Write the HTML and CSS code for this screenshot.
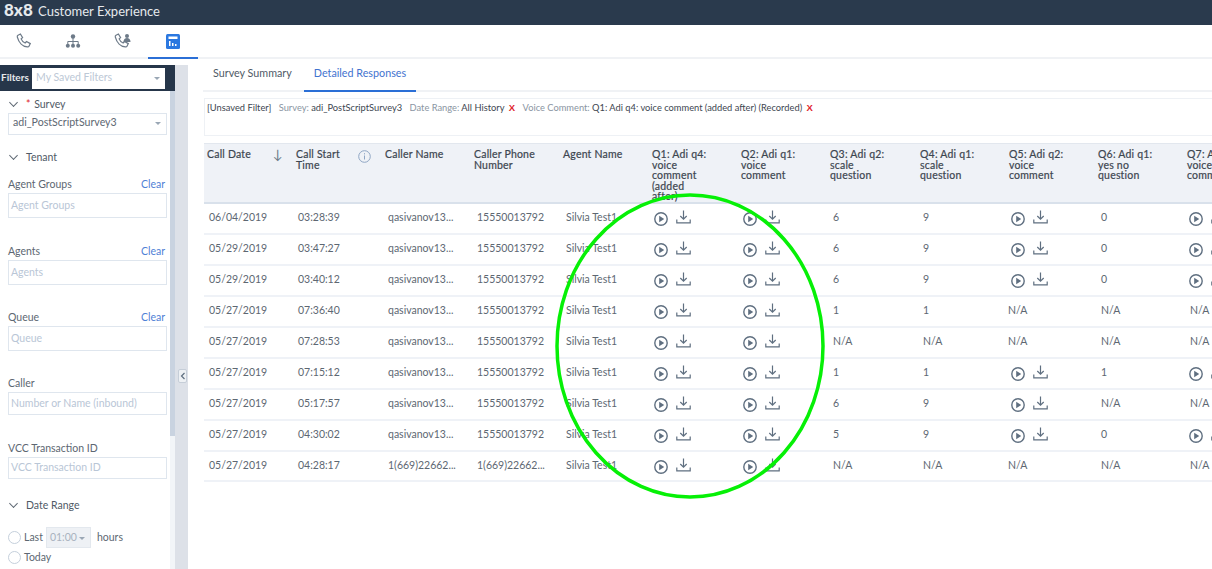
FILE: index.html
```html
<!DOCTYPE html>
<html>
<head>
    <meta charset="utf-8">
    <title>8x8 Customer Experience</title>
    <link rel="stylesheet" href="styles.css">
</head>
<body>
<svg class="defs" width="0" height="0">
    <symbol id="play" viewBox="0 0 14 14">
        <circle cx="7" cy="7" r="6.200" fill="none" stroke="#5f6f80" stroke-width="1.400"/>
        <path d="M5.200 3.800 10.200 7l-5 3.200z" fill="#5f6f80"/>
    </symbol>
    <symbol id="save" viewBox="0 0 15 14">
        <path d="M7.500 .5v8.500M4.300 6l3.200 3.200L10.700 6M.8 9.500v3.300h13.400V9.500" fill="none" stroke="#5f6f80" stroke-width="1.200"/>
    </symbol>
</svg>
<header class="topbar"><b class="logo">8x8</b> Customer Experience</header>
<nav class="nav">
    <a class="nav-item">
        <svg width="16" height="16" viewBox="0 0 16 16"><path d="M2 2.200 4.400 1l2.200 3.600-1.500 1.300c.7 1.800 2.200 3.300 4 4.100l1.400-1.500 3.800 2.100-1.300 2.600c-.3.600-1 .9-1.700.7C6.800 13.600 2.800 9.700 1.300 4c-.2-.7.100-1.400.7-1.800z" fill="none" stroke="#6d7a88" stroke-width="1.200"/></svg>
    </a>
    <a class="nav-item">
        <svg width="16" height="16" viewBox="0 0 16 16"><g fill="#6d7a88"><circle cx="8" cy="3.500" r="2.200"/><circle cx="2.800" cy="12.800" r="2"/><circle cx="8" cy="12.800" r="2"/><circle cx="13.200" cy="12.800" r="2"/></g><path d="M8 5v6M2.800 11V8.500h10.400V11" fill="none" stroke="#6d7a88"/></svg>
    </a>
    <a class="nav-item">
        <svg width="18" height="17" viewBox="0 0 18 17"><path d="M2 2.200 4.400 1l2.200 3.600-1.500 1.300c.7 1.800 2.200 3.300 4 4.100l1.400-1.500 3.800 2.100-1.300 2.600c-.3.600-1 .9-1.700.7C6.800 13.600 2.800 9.700 1.300 4c-.2-.7.100-1.400.7-1.800z" fill="none" stroke="#6d7a88" stroke-width="1.200"/><circle cx="13" cy="3" r="2" fill="#6d7a88"/><path d="M9.500 9c0-2.500 1.500-4 3.500-4s3.500 1.500 3.500 4z" fill="#6d7a88"/></svg>
    </a>
    <a class="nav-item active">
        <svg width="14" height="15" viewBox="0 0 14 15"><rect width="14" height="15" rx="1.500" fill="#2b78e0"/><rect x="2.500" y="2.500" width="9" height="2.500" fill="#fff"/><path d="M3 7h1.500v5H3zM6 9h1.500v3H6zM9 10h1.500v2H9z" fill="#fff"/></svg>
    </a>
</nav>
<div class="page">
    <aside class="sidebar">
        <div class="filters-head">
            <span class="filters-title">Filters</span>
            <div class="saved-filters">My Saved Filters<i class="caret"></i></div>
        </div>
        <div class="sidebar-body">
            <div class="filter-list">
                <div class="section-title first"><i class="chevron"></i><span class="req">*</span> Survey</div>
                <div class="select">adi_PostScriptSurvey3<i class="caret"></i></div>
                <div class="section-title tenant"><i class="chevron"></i>Tenant</div>

                <div class="field-label agent-groups"><span>Agent Groups</span><a>Clear</a></div>
                <div class="input tall">Agent Groups</div>
                <div class="field-label agents"><span>Agents</span><a>Clear</a></div>
                <div class="input tall">Agents</div>
                <div class="field-label queue"><span>Queue</span><a>Clear</a></div>
                <div class="input tall">Queue</div>
                <div class="field-label caller"><span>Caller</span></div>
                <div class="input">Number or Name (inbound)</div>
                <div class="field-label vcc"><span>VCC Transaction ID</span></div>
                <div class="input small">VCC Transaction ID</div>

                <div class="section-title date"><i class="chevron"></i>Date Range</div>
                <div class="radio-row last"><i class="radio"></i>Last<span class="hours">01:00<i class="caret"></i></span>hours</div>
                <div class="radio-row"><i class="radio"></i>Today</div>
            </div>
            <div class="scrollbar"><div class="thumb"></div></div>
        </div>
    </aside>
    <div class="gutter"><span class="collapse">
        <svg width="6" height="8" viewBox="0 0 6 8"><path d="M4.500 1 1.500 4l3 3" fill="none" stroke="#5f6f80" stroke-width="1.200"/></svg>
    </span></div>
    <main class="main">
        <div class="tabs">
            <a class="tab">Survey Summary</a>
            <a class="tab active">Detailed Responses</a>
        </div>
        <div class="filter-summary">
            <span class="dark">[Unsaved Filter]</span>
            <span class="key">Survey:</span> <span class="dark">adi_PostScriptSurvey3</span>
            <span class="key">Date Range:</span> <span class="dark">All History</span> <span class="remove">X</span>
            <span class="key">Voice Comment:</span> <span class="dark">Q1: Adi q4: voice comment (added after) (Recorded)</span> <span class="remove">X</span>
        </div>
        <table class="grid">
            <thead>
                <tr>
                    <th>Call Date<span class="sort">↓</span></th>
                    <th>Call Start<br>Time
                        <svg class="info" width="13" height="13" viewBox="0 0 13 13"><circle cx="6.500" cy="6.500" r="5.800" fill="none" stroke="#8fa6c4"/><path d="M6.500 5.500v4M6.500 3.200v1.200" stroke="#8fa6c4"/></svg>
                    </th>
                    <th>Caller Name</th>
                    <th>Caller Phone<br>Number</th>
                    <th>Agent Name</th>
                    <th>Q1: Adi q4:<br>voice<br>comment<br>(added<br>after)</th>
                    <th>Q2: Adi q1:<br>voice<br>comment</th>
                    <th>Q3: Adi q2:<br>scale<br>question</th>
                    <th>Q4: Adi q1:<br>scale<br>question</th>
                    <th>Q5: Adi q2:<br>voice<br>comment</th>
                    <th>Q6: Adi q1:<br>yes no<br>question</th>
                    <th>Q7: Adi q1:<br>voice<br>comment</th>
                </tr>
            </thead>
            <tbody>
                <tr><td>06/04/2019</td><td>03:28:39</td><td>qasivanov13...</td><td>15550013792</td><td>Silvia Test1</td>
                    <td class="audio"><svg class="play"><use href="#play"/></svg><svg class="save"><use href="#save"/></svg></td>
                    <td class="audio"><svg class="play"><use href="#play"/></svg><svg class="save"><use href="#save"/></svg></td>
                    <td>6</td><td>9</td>
                    <td class="audio"><svg class="play"><use href="#play"/></svg><svg class="save"><use href="#save"/></svg></td>
                    <td>0</td>
                    <td class="audio"><svg class="play"><use href="#play"/></svg><svg class="save"><use href="#save"/></svg></td></tr>
                <tr><td>05/29/2019</td><td>03:47:27</td><td>qasivanov13...</td><td>15550013792</td><td>Silvia Test1</td>
                    <td class="audio"><svg class="play"><use href="#play"/></svg><svg class="save"><use href="#save"/></svg></td>
                    <td class="audio"><svg class="play"><use href="#play"/></svg><svg class="save"><use href="#save"/></svg></td>
                    <td>6</td><td>9</td>
                    <td class="audio"><svg class="play"><use href="#play"/></svg><svg class="save"><use href="#save"/></svg></td>
                    <td>0</td>
                    <td class="audio"><svg class="play"><use href="#play"/></svg><svg class="save"><use href="#save"/></svg></td></tr>
                <tr><td>05/29/2019</td><td>03:40:12</td><td>qasivanov13...</td><td>15550013792</td><td>Silvia Test1</td>
                    <td class="audio"><svg class="play"><use href="#play"/></svg><svg class="save"><use href="#save"/></svg></td>
                    <td class="audio"><svg class="play"><use href="#play"/></svg><svg class="save"><use href="#save"/></svg></td>
                    <td>6</td><td>9</td>
                    <td class="audio"><svg class="play"><use href="#play"/></svg><svg class="save"><use href="#save"/></svg></td>
                    <td>0</td>
                    <td class="audio"><svg class="play"><use href="#play"/></svg><svg class="save"><use href="#save"/></svg></td></tr>
                <tr><td>05/27/2019</td><td>07:36:40</td><td>qasivanov13...</td><td>15550013792</td><td>Silvia Test1</td>
                    <td class="audio"><svg class="play"><use href="#play"/></svg><svg class="save"><use href="#save"/></svg></td>
                    <td class="audio"><svg class="play"><use href="#play"/></svg><svg class="save"><use href="#save"/></svg></td>
                    <td>1</td><td>1</td><td>N/A</td><td>N/A</td><td>N/A</td></tr>
                <tr><td>05/27/2019</td><td>07:28:53</td><td>qasivanov13...</td><td>15550013792</td><td>Silvia Test1</td>
                    <td class="audio"><svg class="play"><use href="#play"/></svg><svg class="save"><use href="#save"/></svg></td>
                    <td class="audio"><svg class="play"><use href="#play"/></svg><svg class="save"><use href="#save"/></svg></td>
                    <td>N/A</td><td>N/A</td><td>N/A</td><td>N/A</td><td>N/A</td></tr>
                <tr><td>05/27/2019</td><td>07:15:12</td><td>qasivanov13...</td><td>15550013792</td><td>Silvia Test1</td>
                    <td class="audio"><svg class="play"><use href="#play"/></svg><svg class="save"><use href="#save"/></svg></td>
                    <td class="audio"><svg class="play"><use href="#play"/></svg><svg class="save"><use href="#save"/></svg></td>
                    <td>1</td><td>1</td>
                    <td class="audio"><svg class="play"><use href="#play"/></svg><svg class="save"><use href="#save"/></svg></td>
                    <td>1</td>
                    <td class="audio"><svg class="play"><use href="#play"/></svg><svg class="save"><use href="#save"/></svg></td></tr>
                <tr><td>05/27/2019</td><td>05:17:57</td><td>qasivanov13...</td><td>15550013792</td><td>Silvia Test1</td>
                    <td class="audio"><svg class="play"><use href="#play"/></svg><svg class="save"><use href="#save"/></svg></td>
                    <td class="audio"><svg class="play"><use href="#play"/></svg><svg class="save"><use href="#save"/></svg></td>
                    <td>6</td><td>9</td>
                    <td class="audio"><svg class="play"><use href="#play"/></svg><svg class="save"><use href="#save"/></svg></td>
                    <td>N/A</td><td>N/A</td></tr>
                <tr><td>05/27/2019</td><td>04:30:02</td><td>qasivanov13...</td><td>15550013792</td><td>Silvia Test1</td>
                    <td class="audio"><svg class="play"><use href="#play"/></svg><svg class="save"><use href="#save"/></svg></td>
                    <td class="audio"><svg class="play"><use href="#play"/></svg><svg class="save"><use href="#save"/></svg></td>
                    <td>5</td><td>9</td>
                    <td class="audio"><svg class="play"><use href="#play"/></svg><svg class="save"><use href="#save"/></svg></td>
                    <td>0</td>
                    <td class="audio"><svg class="play"><use href="#play"/></svg><svg class="save"><use href="#save"/></svg></td></tr>
                <tr><td>05/27/2019</td><td>04:28:17</td><td>1(669)22662...</td><td>1(669)22662...</td><td>Silvia Test1</td>
                    <td class="audio"><svg class="play"><use href="#play"/></svg><svg class="save"><use href="#save"/></svg></td>
                    <td class="audio"><svg class="play"><use href="#play"/></svg><svg class="save"><use href="#save"/></svg></td>
                    <td>N/A</td><td>N/A</td><td>N/A</td><td>N/A</td><td>N/A</td></tr>
            </tbody>
        </table>
    </main>
</div>
<svg class="marker" width="280" height="316" viewBox="0 0 280 316">
    <ellipse cx="140" cy="158" rx="133" ry="151" fill="none" stroke="#06f006" stroke-width="3.500"/>
</svg>
</body>
</html>
```

FILE: styles.css
```css
html, body {
    margin: 0;
    height: 100%;
    overflow: hidden;
}

body {
    position: relative;
    background-color: #fff;
    color: #5d6772;
    font-family: "Lato", "Liberation Sans", sans-serif;
    font-size: 10.5px;
}

.defs {
    position: absolute;
}

.topbar {
    height: 25px;
    background-color: #2a3a4d;
    color: #e6e9ec;
    font-size: 13px;
    line-height: 19px;
    padding-left: 4px;
    box-sizing: border-box;
}

.logo {
    font-size: 17px;
    font-weight: 900;
    margin-right: 2px;
}

.nav {
    display: flex;
    height: 34px;
    border-bottom: 2px solid #f0f2f5;
    box-sizing: border-box;
}

.nav-item {
    width: 50px;
    display: flex;
    justify-content: center;
    padding-top: 8px;
    box-sizing: border-box;
    margin-bottom: -2px;
}

.nav-item:first-child {
    width: 48px;
}

.nav-item.active {
    border-bottom: 2px solid #2b6fd6;
    padding-top: 9px;
}

.page {
    display: flex;
    height: 510px;
}

.sidebar {
    width: 175px;
    margin-top: 6px;
    flex-shrink: 0;
}

.filters-head {
    display: flex;
    align-items: center;
    height: 26px;
    background-color: #26364a;
    color: #e6e9ec;
    padding-left: 1px;
    font-size: 10px;
    font-weight: 700;
}

.filters-title {
    width: 31px;
    padding-bottom: 3px;
}

.saved-filters {
    position: relative;
    width: 133px;
    height: 21px;
    line-height: 18px;
    padding-left: 4px;
    box-sizing: border-box;
    background-color: #fff;
    color: #bcc8d6;
    font-size: 10.5px;
    font-weight: 400;
}

.caret {
    position: absolute;
    right: 5px;
    top: 9px;
    border: 3px solid transparent;
    border-top: 3px solid #9aa7b5;
    border-bottom: 0;
}

.sidebar-body {
    display: flex;
    height: 478px;
}

.filter-list {
    width: 159px;
    margin-left: 8px;
    margin-right: 3px;
    flex-shrink: 0;
}

.section-title {
    position: relative;
    padding-left: 18px;
    color: #4f5a66;
    line-height: 13px;
}

.section-title.first {
    margin-top: 7px;
}

.section-title.tenant {
    margin-top: 16px;
}

.section-title.date {
    margin-top: 20px;
}

.chevron {
    position: absolute;
    left: 2px;
    top: 1px;
    width: 6px;
    height: 6px;
    border-right: 1px solid #5d6772;
    border-bottom: 1px solid #5d6772;
    transform: rotate(45deg) scale(0.9, 0.9);
}

.req {
    color: #e0242c;
    margin-right: 1px;
}

.select {
    position: relative;
    height: 22px;
    line-height: 16px;
    padding-left: 4px;
    margin-top: 2px;
    border: 1px solid #dfe6ee;
    box-sizing: border-box;
    font-size: 10.6px;
}

.select .caret {
    top: 8px;
}

.field-label {
    display: flex;
    justify-content: space-between;
    padding-right: 2px;
    line-height: 13px;
    margin-bottom: 2px;
}

.field-label a {
    color: #4f7fd6;
}

.field-label.agent-groups {
    margin-top: 14px;
}

.field-label.agents {
    margin-top: 27px;
}

.field-label.queue {
    margin-top: 26px;
}

.field-label.caller {
    margin-top: 26px;
}

.field-label.vcc {
    margin-top: 27px;
}

.input {
    height: 23px;
    line-height: 20px;
    padding-left: 2px;
    border: 1px solid #dfe6ee;
    box-sizing: border-box;
    color: #b9c6d6;
}

.input.tall {
    height: 25px;
    line-height: 22px;
}

.input.small {
    height: 22px;
    line-height: 19px;
}

.radio-row {
    display: flex;
    align-items: center;
    height: 20px;
}

.radio-row.last {
    margin-top: 15px;
}

.radio {
    width: 11px;
    height: 11px;
    margin-right: 3px;
    border: 1px solid #c5d0dc;
    border-radius: 50%;
}

.hours {
    position: relative;
    width: 45px;
    height: 21px;
    line-height: 19px;
    margin: 0 6px 0 3px;
    padding-left: 3px;
    box-sizing: border-box;
    background-color: #eef1f5;
    color: #a9b3bf;
    border: 1px solid #e3e8ee;
}

.scrollbar {
    width: 5px;
    background-color: #f2f5f8;
}

.thumb {
    height: 345px;
    background-color: #c9d3e0;
}

.gutter {
    position: relative;
    width: 13px;
    background-color: #dde1e8;
    margin-top: 6px;
    flex-shrink: 0;
}

.collapse {
    position: absolute;
    left: 3px;
    top: 304px;
    width: 9px;
    height: 14px;
    display: flex;
    align-items: center;
    justify-content: center;
    background-color: #eef1f4;
    border: 1px solid #c6ced8;
    border-radius: 2px;
    box-sizing: border-box;
}

.main {
    flex: 1;
    min-width: 0;
    overflow: hidden;
}

.tabs {
    display: flex;
    height: 33px;
    margin-left: 15px;
    border-bottom: 2px solid #f0f2f5;
    box-sizing: border-box;
    font-size: 10.75px;
    line-height: 28px;
    white-space: nowrap;
}

.tab {
    color: #4f5a66;
    padding: 0 10px;
    margin-right: 2px;
}

.tab.active {
    color: #3f73cf;
    width: 112px;
    box-sizing: border-box;
    height: 33px;
    border-bottom: 2px solid #2b6fd6;
}

.filter-summary {
    height: 38px;
    margin: 6px 0 7px 16px;
    padding: 2px;
    border: 1px solid #eef1f5;
    border-right: 0;
    box-sizing: border-box;
    font-size: 9.3px;
    line-height: 13px;
    white-space: nowrap;
}

.dark {
    color: #3d4650;
    margin-right: 2px;
}

.key {
    color: #8a95a2;
    margin-left: 3px;
}

.remove {
    color: #e0242c;
    font-family: "Liberation Sans", sans-serif;
    font-size: 9.5px;
    font-weight: 700;
    margin-right: 2px;
}

.grid {
    margin-left: 16px;
    border-collapse: collapse;
    table-layout: fixed;
    width: 1069px;
}

.grid th {
    position: relative;
    width: 89px;
    height: 59px;
    padding: 5px 0 0 3px;
    box-sizing: border-box;
    vertical-align: top;
    text-align: left;
    background-color: #eff2f7;
    border-top: 1px solid #e2e7ee;
    border-bottom: 2px solid #d9e1eb;
    color: #3d4650;
    font-size: 10.5px;
    letter-spacing: 0.2px;
    font-weight: 400;
    line-height: 10.5px;
    -webkit-text-stroke: 0.2px #3d4650;
    overflow: hidden;
}

.grid th:nth-child(8) {
    width: 90px;
}

.sort {
    position: absolute;
    left: 69px;
    top: 5px;
    font-size: 13px;
    color: #6d7a88;
    -webkit-text-stroke: 0;
}

.info {
    position: absolute;
    left: 65px;
    top: 6px;
}

.grid td {
    height: 31px;
    padding: 0 0 2px 6px;
    box-sizing: border-box;
    border-bottom: 2px solid #eff2f7;
    white-space: nowrap;
    overflow: hidden;
    font-size: 10.5px;
    color: #5d6772;
}

.grid tr:last-child td {
    height: 30px;
}

.grid td:nth-child(-n+2) {
    padding-left: 5px;
}

.grid td:nth-child(10) {
    padding-left: 2px;
}

.grid td.audio {
    padding: 6px 0 0 5px;
    vertical-align: top;
}

.play {
    width: 14px;
    height: 14px;
    vertical-align: top;
    margin-top: 2px;
}

.save {
    width: 15px;
    height: 14px;
    vertical-align: top;
    margin-left: 8px;
}

.marker {
    position: absolute;
    left: 550px;
    top: 188px;
}
```
